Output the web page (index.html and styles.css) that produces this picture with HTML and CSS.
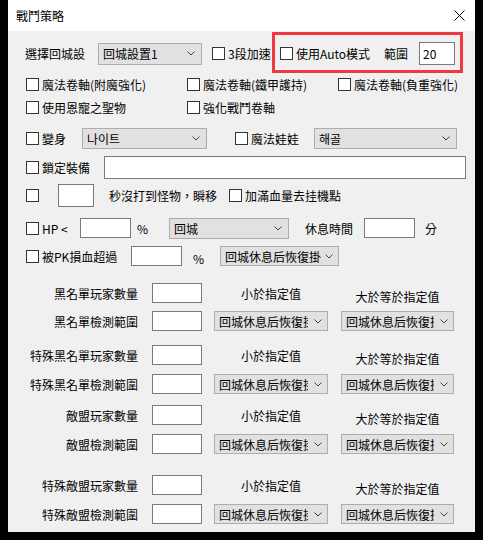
FILE: index.html
```html
<!DOCTYPE html>
<html lang="zh-Hant">

<head>
    <meta charset="UTF-8">
    <meta name="viewport" content="width=device-width, initial-scale=1.0">
    <title>戰鬥策略</title>
    <link rel="stylesheet" href="styles.css">
</head>

<body>
    <div class="window">
        <div class="titlebar">
            <span class="title">戰鬥策略</span>
            <svg class="close" width="11" height="11" viewBox="0 0 11 11">
                <path d="M0.5 0.5L10.5 10.5M10.5 0.5L0.5 10.5" stroke="#000" stroke-width="1" />
            </svg>
        </div>

        <div class="content">
            <!-- annotation frame drawn over the auto-mode controls -->
            <div class="highlight"></div>

            <div class="row r1">
                <span class="set-label">選擇回城設</span>
                <div class="select sel-set">
                    <span class="sel-text">回城設置1</span>
                    <svg class="chev" width="8" height="5" viewBox="0 0 8 5"><path d="M0.5 0.5L4 4L7.5 0.5" fill="none" stroke="#444" /></svg>
                </div>
                <label class="chk speed"><span class="box"></span>3段加速</label>
                <label class="chk auto"><span class="box"></span>使用Auto模式</label>
                <span class="range-label">範圍</span>
                <input class="field range" type="text" value="20">
            </div>

            <div class="opts r2">
                <label class="chk"><span class="box"></span>魔法卷軸(附魔強化)</label>
                <label class="chk"><span class="box"></span>魔法卷軸(鐵甲護持)</label>
                <label class="chk"><span class="box"></span>魔法卷軸(負重強化)</label>
            </div>
            <div class="opts r3">
                <label class="chk"><span class="box"></span>使用恩寵之聖物</label>
                <label class="chk"><span class="box"></span>強化戰鬥卷軸</label>
            </div>

            <div class="row r4">
                <label class="chk poly"><span class="box"></span>變身</label>
                <div class="select sel-poly">
                    <span class="sel-text">나이트</span>
                    <svg class="chev" width="8" height="5" viewBox="0 0 8 5"><path d="M0.5 0.5L4 4L7.5 0.5" fill="none" stroke="#444" /></svg>
                </div>
                <label class="chk doll"><span class="box"></span>魔法娃娃</label>
                <div class="select sel-doll">
                    <span class="sel-text">해골</span>
                    <svg class="chev" width="8" height="5" viewBox="0 0 8 5"><path d="M0.5 0.5L4 4L7.5 0.5" fill="none" stroke="#444" /></svg>
                </div>
            </div>

            <div class="row tall r5">
                <label class="chk lock"><span class="box"></span>鎖定裝備</label>
                <input class="field lock-field" type="text">
            </div>

            <div class="row tall r6">
                <label class="chk idle"><span class="box"></span></label>
                <input class="field secs" type="text">
                <span class="idle-text">秒沒打到怪物，瞬移</span>
                <label class="chk"><span class="box"></span>加滿血量去挂機點</label>
            </div>

            <div class="row r7">
                <label class="chk hp"><span class="box"></span>HP &lt;</label>
                <input class="field num" type="text">
                <span class="pct">%</span>
                <div class="select sel-hp">
                    <span class="sel-text">回城</span>
                    <svg class="chev" width="8" height="5" viewBox="0 0 8 5"><path d="M0.5 0.5L4 4L7.5 0.5" fill="none" stroke="#444" /></svg>
                </div>
                <span class="rest-label">休息時間</span>
                <input class="field num" type="text">
                <span class="minute">分</span>
            </div>

            <div class="row r8">
                <label class="chk pk"><span class="box"></span>被PK損血超過</label>
                <input class="field num" type="text">
                <span class="pct pct-pk">%</span>
                <div class="select sel-pk">
                    <span class="sel-text">回城休息后恢復掛</span>
                    <svg class="chev" width="8" height="5" viewBox="0 0 8 5"><path d="M0.5 0.5L4 4L7.5 0.5" fill="none" stroke="#444" /></svg>
                </div>
            </div>

            <div class="grid-row r9">
                <span class="g-label">黑名單玩家數量</span>
                <input class="field g-field" type="text">
                <span class="g-note">小於指定值</span>
                <span class="g-note low">大於等於指定值</span>
            </div>
            <div class="grid-row r10">
                <span class="g-label">黑名單檢測範圍</span>
                <input class="field g-field" type="text">
                <div class="select g-sel">
                    <span class="sel-text">回城休息后恢復掛</span>
                    <svg class="chev" width="8" height="5" viewBox="0 0 8 5"><path d="M0.5 0.5L4 4L7.5 0.5" fill="none" stroke="#444" /></svg>
                </div>
                <div class="select g-sel">
                    <span class="sel-text">回城休息后恢復掛</span>
                    <svg class="chev" width="8" height="5" viewBox="0 0 8 5"><path d="M0.5 0.5L4 4L7.5 0.5" fill="none" stroke="#444" /></svg>
                </div>
            </div>

            <div class="grid-row r11">
                <span class="g-label">特殊黑名單玩家數量</span>
                <input class="field g-field" type="text">
                <span class="g-note">小於指定值</span>
                <span class="g-note low">大於等於指定值</span>
            </div>
            <div class="grid-row r12">
                <span class="g-label">特殊黑名單檢測範圍</span>
                <input class="field g-field" type="text">
                <div class="select g-sel">
                    <span class="sel-text">回城休息后恢復掛</span>
                    <svg class="chev" width="8" height="5" viewBox="0 0 8 5"><path d="M0.5 0.5L4 4L7.5 0.5" fill="none" stroke="#444" /></svg>
                </div>
                <div class="select g-sel">
                    <span class="sel-text">回城休息后恢復掛</span>
                    <svg class="chev" width="8" height="5" viewBox="0 0 8 5"><path d="M0.5 0.5L4 4L7.5 0.5" fill="none" stroke="#444" /></svg>
                </div>
            </div>

            <div class="grid-row r13">
                <span class="g-label">敵盟玩家數量</span>
                <input class="field g-field" type="text">
                <span class="g-note">小於指定值</span>
                <span class="g-note low">大於等於指定值</span>
            </div>
            <div class="grid-row r14">
                <span class="g-label">敵盟檢測範圍</span>
                <input class="field g-field" type="text">
                <div class="select g-sel">
                    <span class="sel-text">回城休息后恢復掛</span>
                    <svg class="chev" width="8" height="5" viewBox="0 0 8 5"><path d="M0.5 0.5L4 4L7.5 0.5" fill="none" stroke="#444" /></svg>
                </div>
                <div class="select g-sel">
                    <span class="sel-text">回城休息后恢復掛</span>
                    <svg class="chev" width="8" height="5" viewBox="0 0 8 5"><path d="M0.5 0.5L4 4L7.5 0.5" fill="none" stroke="#444" /></svg>
                </div>
            </div>

            <div class="grid-row r15">
                <span class="g-label">特殊敵盟玩家數量</span>
                <input class="field g-field" type="text">
                <span class="g-note">小於指定值</span>
                <span class="g-note low">大於等於指定值</span>
            </div>
            <div class="grid-row r16">
                <span class="g-label">特殊敵盟檢測範圍</span>
                <input class="field g-field" type="text">
                <div class="select g-sel">
                    <span class="sel-text">回城休息后恢復掛</span>
                    <svg class="chev" width="8" height="5" viewBox="0 0 8 5"><path d="M0.5 0.5L4 4L7.5 0.5" fill="none" stroke="#444" /></svg>
                </div>
                <div class="select g-sel">
                    <span class="sel-text">回城休息后恢復掛</span>
                    <svg class="chev" width="8" height="5" viewBox="0 0 8 5"><path d="M0.5 0.5L4 4L7.5 0.5" fill="none" stroke="#444" /></svg>
                </div>
            </div>
        </div>
    </div>
</body>

</html>
```

FILE: styles.css
```css
body {
    margin: 0;
    background: #000;
    font-family: "Noto Sans CJK TC", "Noto Sans", sans-serif;
    font-size: 12px;
    color: #000;
}

.window {
    position: relative;
    margin-left: 8px;
    width: 467px;
    height: 532px;
    background: #f0f0f0;
    overflow: hidden;
}

.titlebar {
    height: 31px;
    background: #fff;
    display: flex;
    align-items: center;
    justify-content: space-between;
    padding: 0 10px 0 8px;
    box-sizing: border-box;
}

.content {
    padding: 11px 0 0 18px;
}

.highlight {
    position: absolute;
    left: 264px;
    top: 32px;
    width: 191px;
    height: 41px;
    border: 3px solid #ee3a3f;
    box-sizing: border-box;
    pointer-events: none;
}

/* rows */
.row {
    display: flex;
    align-items: center;
    height: 22px;
}

.row.tall {
    height: 23px;
}

.opts {
    display: grid;
    grid-template-columns: 161px 151px auto;
    align-items: center;
    height: 22px;
}

.grid-row {
    display: flex;
    align-items: center;
    height: 22px;
    margin-top: 7px;
}

.r1 { height: 23px; }
.r2 { margin-top: 8px; }
.r3 { margin-top: 1px; }
.r4 { margin-top: 9px; }
.r5 { margin-top: 7px; }
.r6 { margin-top: 5px; }
.r7 { margin-top: 10px; }
.r8 { margin-top: 6px; }
.r9 { margin-top: 15px; }
.r10 { margin-top: 6px; }
.r11 { margin-top: 12px; }
.r13 { margin-top: 9px; }
.r15 { margin-top: 19px; }

/* controls */
.chk {
    display: inline-flex;
    align-items: center;
    gap: 3px;
    white-space: nowrap;
}

.box {
    width: 13px;
    height: 13px;
    border: 1px solid #333;
    background: #fff;
    box-sizing: border-box;
    flex: none;
}

.field {
    box-sizing: border-box;
    height: 20px;
    margin: 0;
    padding: 0 3px;
    border: 1px solid #7a7a7a;
    background: #fff;
    font: inherit;
    color: #000;
    outline: none;
}

.select {
    display: flex;
    align-items: center;
    height: 21px;
    padding: 0 6px 0 4px;
    background: #e1e1e1;
    border: 1px solid #adadad;
    box-sizing: border-box;
    flex: none;
}

.sel-text {
    flex: 1;
    overflow: hidden;
    white-space: nowrap;
}

.chev {
    flex: none;
    margin-left: 8px;
}

/* row 1 */
.set-label {
    width: 73px;
    margin-left: -1px;
}

.sel-set {
    width: 104px;
    height: 22px;
}

.speed {
    margin-left: 10px;
    width: 68px;
}

.auto {
    width: 104px;
}

.range-label {
    width: 35px;
}

.range {
    width: 36px;
    height: 23px;
}

/* row 4 */
.poly {
    width: 56px;
}

.sel-poly {
    width: 125px;
}

.doll {
    margin-left: 28px;
    width: 79px;
}

.sel-doll {
    width: 143px;
}

/* row 5, 6 */
.lock {
    width: 78px;
}

.lock-field {
    width: 362px;
    height: 23px;
}

.idle {
    width: 32px;
}

.secs {
    width: 36px;
    height: 23px;
}

.idle-text {
    margin-left: 15px;
    width: 120px;
}

/* row 7, 8 */
.hp {
    width: 54px;
}

.num {
    width: 51px;
}

.pct {
    margin-left: 6px;
    width: 32px;
}

.pct-pk {
    margin-left: 11px;
    width: 27px;
    padding-top: 4px;
}

.sel-hp {
    width: 120px;
}

.rest-label {
    margin-left: 16px;
    width: 59px;
}

.minute {
    margin-left: 10px;
}

.pk {
    width: 105px;
}

.sel-pk {
    width: 119px;
    height: 20px;
    padding-right: 5px;
}

.sel-pk .chev {
    margin-left: 3px;
}

/* threshold block */
.g-label {
    width: 112px;
    padding-right: 14px;
    text-align: right;
    white-space: nowrap;
}

.g-field {
    width: 50px;
    margin-right: 12px;
}

.g-note {
    width: 114px;
    margin-right: 13px;
    text-align: center;
    white-space: nowrap;
}

.g-note.low {
    width: 113px;
    padding-top: 6px;
}

.g-sel {
    width: 114px;
    height: 20px;
    margin-right: 13px;
    padding-right: 5px;
}

.g-sel .chev {
    margin-left: 6px;
}

.g-sel:last-child {
    width: 113px;
}
```
